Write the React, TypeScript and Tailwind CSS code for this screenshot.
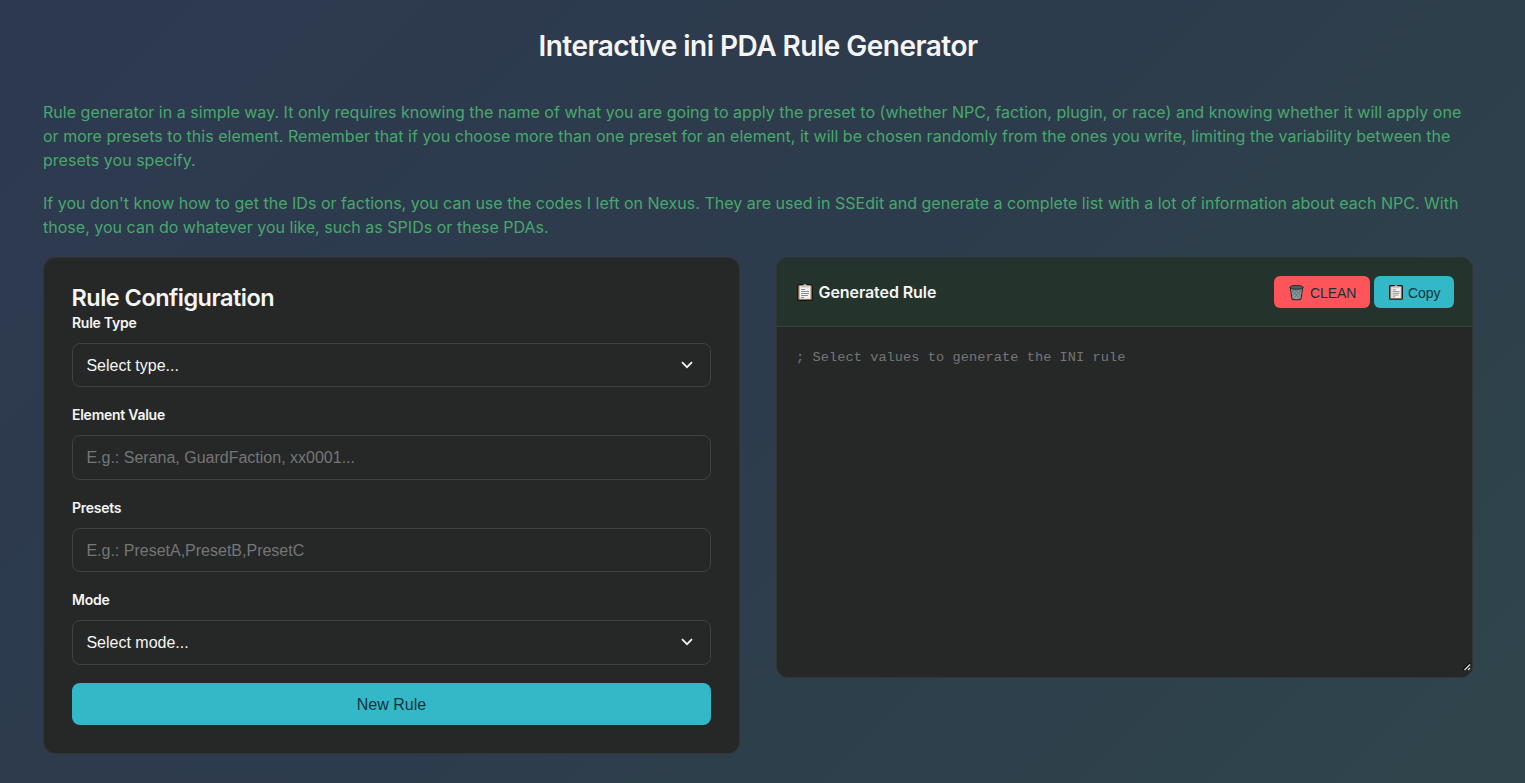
import type { ReactNode } from "react";

function Clipboard({ className }: { className: string }) {
  return (
    <svg viewBox="0 0 16 18" className={className} aria-hidden="true">
      <rect x="0.7" y="1.7" width="14.6" height="15.6" rx="1" fill="#b98a6b" stroke="#111817" strokeWidth="1.3" />
      <rect x="2.6" y="3.2" width="10.8" height="12.6" fill="#f3f3f3" />
      <path d="M4 4.6V2.6h2.2C6.4.9 9.6.9 9.8 2.6H12v2z" fill="#c4c7ca" />
      <path d="M4 6.5h4M4 8.5h8M4 10.5h8M4 12.5h7M4 14.5h3" stroke="#7d8184" strokeWidth="0.9" />
    </svg>
  );
}

function Trash({ className }: { className: string }) {
  return (
    <svg viewBox="0 0 16 17" className={className} aria-hidden="true">
      <path d="M1.4 3.5h13.2L12.9 15c-.2 1.7-9.6 1.7-9.8 0z" fill="#8b9a9d" stroke="#26292b" strokeWidth="1.1" />
      <path d="M3 6l8.6 9M6 5l6.6 7M10 5l3 3.2M13 6l-8.6 9M10 5l-6.6 7M6 5L3 8.2" stroke="#5b686c" strokeWidth=".8" />
      <ellipse cx="8" cy="3" rx="7.2" ry="2.1" fill="#505c60" stroke="#26292b" strokeWidth="1" />
    </svg>
  );
}

function Field({ label, children }: { label: string; children: ReactNode }) {
  return (
    <div className="mb-[17px]">
      <label className="mb-[9px] block h-[22px] text-[14px] leading-[22px] font-semibold tracking-[-0.26px] text-[#f5f5f5]">{label}</label>
      {children}
    </div>
  );
}

const control =
  "block h-[44.4px] w-full rounded-[8px] border border-[#3f4241] bg-[#262828] px-[13.4px] pt-[1.6px] font-['Liberation_Sans',sans-serif] text-[16px]";

function SelectBox({ text }: { text: string }) {
  return (
    <button className={`${control} text-left text-[#f5f5f5]`}>
      <span className="flex items-center justify-between">
        {text}
        <svg viewBox="0 0 12 8" className="mr-1 mb-[2px] h-2 w-3" fill="none" stroke="#f5f5f5" strokeWidth="1.7">
          <path d="M1 1.2l5 5 5-5" />
        </svg>
      </span>
    </button>
  );
}

export default function App() {
  return (
    <div className="h-[783px] overflow-hidden bg-[linear-gradient(135deg,#2d3950_0%,#2d3c4c_50%,#2f454b_100%)] px-[43px] font-['Inter',sans-serif] text-[#f5f5f5]">
      <h1 className="-ml-[9px] pt-[29px] text-center text-[28px] leading-[34px] font-semibold tracking-[-0.52px]">
        Interactive ini PDA Rule Generator
      </h1>
      <div className="mt-[37px] space-y-[19px] text-[16px] leading-6 tracking-[0.019px] whitespace-nowrap text-[#48a86c]">
        <p>
          Rule generator in a simple way. It only requires knowing the name of what you are going to apply the preset to (whether NPC, faction, plugin, or race) and knowing whether it will apply one<br />
          or more presets to this element. Remember that if you choose more than one preset for an element, it will be chosen randomly from the ones you write, limiting the variability between the<br />
          presets you specify.
        </p>
        <p>
          If you don't know how to get the IDs or factions, you can use the codes I left on Nexus. They are used in SSEdit and generate a complete list with a lot of information about each NPC. With<br />
          those, you can do whatever you like, such as SPIDs or these PDAs.
        </p>
      </div>
      <div className="mt-[18px] flex items-start gap-[36px]">
        <section className="h-[497px] w-[697px] rounded-[12px] border border-[#333534] bg-[#262828] px-7 pt-[26px]">
          <h2 className="-ml-[0.5px] h-[28px] text-[23.5px] leading-[28px] font-semibold tracking-[-0.52px]">Rule Configuration</h2>
          <Field label="Rule Type">
            <SelectBox text="Select type..." />
          </Field>
          <Field label="Element Value">
            <input className={`${control} placeholder:text-[#757575]`} placeholder="E.g.: Serana, GuardFaction, xx0001..." />
          </Field>
          <Field label="Presets">
            <input className={`${control} placeholder:text-[#757575]`} placeholder="E.g.: PresetA,PresetB,PresetC" />
          </Field>
          <Field label="Mode">
            <SelectBox text="Select mode..." />
          </Field>
          <button className="mt-[18px] block h-[42px] w-full rounded-[8px] bg-[#33b8c8] pt-[2px] font-['Liberation_Sans',sans-serif] text-[16px] text-[#13343b]">New Rule</button>
        </section>
        <section className="h-[421px] w-[697px] overflow-hidden rounded-[12px] border border-[#333534] bg-[#262828]">
          <header className="flex h-[69px] items-center justify-between border-b border-[#35443c] bg-[#24332b] pr-[18px] pb-px pl-[20px]">
            <h3 className="flex items-center text-[16px] font-semibold tracking-[-0.08px]">
              <Clipboard className="mr-[5.5px] h-[18px] w-4" />
              Generated Rule
            </h3>
            <div className="flex gap-1 font-['Liberation_Sans',sans-serif] text-[14px] text-[#13343b]">
              <button className="flex h-8 w-24 items-center rounded-[6px] bg-[#ff5459] pt-px pl-[15px]">
                <Trash className="mr-[6px] h-[17px] w-[15px]" />
                <span className="pt-[2px] tracking-[-0.1px]">CLEAN</span>
              </button>
              <button className="flex h-8 w-20 items-center rounded-[6px] bg-[#33b8c8] pt-px pl-[15px]">
                <Clipboard className="mr-[5px] h-4 w-[14px]" />
                <span className="pt-[2px] tracking-[-0.1px]">Copy</span>
              </button>
            </div>
          </header>
          <div className="relative h-[350px]">
            <textarea
              className="block h-full w-full resize-none bg-transparent px-[19px] pt-[20px] font-['Liberation_Mono',monospace] text-[13.6px] leading-[22px] tracking-[0.08px] placeholder:text-[#757575]"
              placeholder="; Select values to generate the INI rule"
            />
            <svg viewBox="0 0 8 8" className="absolute right-px bottom-[6px] size-2" aria-hidden="true">
              <path d="M0 7L7 0M4 7l3-3" stroke="#111" strokeWidth="2" />
              <path d="M1.5 7L7 1.5M5 7l2-2" stroke="#ddd" strokeWidth="1.3" />
            </svg>
          </div>
        </section>
      </div>
    </div>
  );
}
